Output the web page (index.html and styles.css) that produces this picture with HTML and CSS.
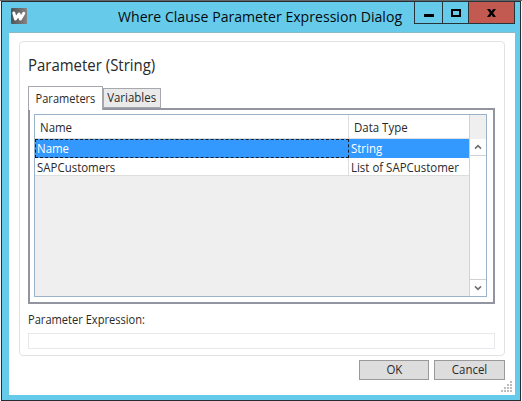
FILE: index.html
```html
<!DOCTYPE html>
<html lang="en">
<head>
<meta charset="utf-8">
<title>Where Clause Parameter Expression Dialog</title>
<link rel="stylesheet" href="styles.css">
</head>
<body>
<div class="window">
  <header class="titlebar">
    <svg class="logo" width="16" height="16" viewBox="0 0 16 16">
      <defs><linearGradient id="g" x1="0" y1="0" x2="1" y2="0"><stop offset="0" stop-color="#505457"/><stop offset="1" stop-color="#85817f"/></linearGradient></defs>
      <rect width="16" height="16" rx="1" fill="url(#g)"/>
      <path d="M2.8 5 L4.5 11 L8 6 L9.4 11 L12.8 5.2" fill="none" stroke="#fff" stroke-width="3" stroke-linejoin="round" stroke-linecap="round"/>
    </svg>
    <h1 class="caption"><span>Where Clause Parameter Expression Dialog</span></h1>
    <div class="controls">
      <button class="control minimize" aria-label="Minimize"><svg width="10" height="10" viewBox="0 0 10 10"><path d="M0 7.5H10" stroke="#000" stroke-width="3"/></svg></button>
      <button class="control maximize" aria-label="Maximize"><svg width="10" height="8" viewBox="0 0 10 8"><path d="M1 1H9V7H1Z" fill="none" stroke="#000" stroke-width="2"/></svg></button>
      <button class="control close" aria-label="Close"><svg width="9" height="8" viewBox="0 0 9 8"><path d="M0 0H3L4.5 2.2L6 0H9L6.1 4L9 8H6L4.5 5.8L3 8H0L2.9 4Z"/></svg></button>
    </div>
  </header>
  <main class="client">
    <section class="group">
      <h2 class="heading"><span>Parameter (String)</span></h2>
      <div class="tabs">
        <div class="tab active"><span>Parameters</span></div>
        <div class="tab"><span>Variables</span></div>
      </div>
      <div class="panel">
        <div class="grid">
          <div class="table">
            <div class="row head"><div class="cell"><span>Name</span></div><div class="cell"><span>Data Type</span></div></div>
            <div class="row selected"><div class="cell focused"><span>Name</span></div><div class="cell"><span>String</span></div></div>
            <div class="row"><div class="cell"><span>SAPCustomers</span></div><div class="cell"><span>List of SAPCustomer</span></div></div>
          </div>
          <div class="scroll">
            <div class="corner"></div>
            <div class="arrow up"><svg width="8" height="6" viewBox="0 0 8 6"><path d="M1 4.6L4 1.6L7 4.6" fill="none" stroke="#707070" stroke-width="1.6"/></svg></div>
            <div class="track"></div>
            <div class="arrow down"><svg width="8" height="6" viewBox="0 0 8 6"><path d="M1 1.4L4 4.4L7 1.4" fill="none" stroke="#707070" stroke-width="1.6"/></svg></div>
          </div>
        </div>
      </div>
      <div class="label"><span>Parameter Expression:</span></div>
      <div class="input"></div>
    </section>
    <footer class="actions">
      <button class="button ok"><span>OK</span></button>
      <button class="button"><span>Cancel</span></button>
    </footer>
    <svg class="grip" width="12" height="12" viewBox="0 0 12 12" fill="#bdbdbd"><path d="M9 0h2v2h-2zM9 3h2v2h-2zM6 3h2v2h-2zM9 6h2v2h-2zM6 6h2v2h-2zM3 6h2v2h-2zM9 9h2v2h-2zM6 9h2v2h-2zM3 9h2v2h-2zM0 9h2v2h-2z"/></svg>
  </main>
</div>
</body>
</html>
```
FILE: styles.css
```css
* { box-sizing: border-box; }
body {
  margin: 0;
  width: 522px;
  height: 401px;
  padding: 1px 1px 0;
  overflow: hidden;
  background: linear-gradient(#62666a 1px, #f7f7f8 1px);
  font: 12px "Open Sans", "Noto Sans", sans-serif;
  color: #292929;
}
h1, h2 { margin: 0; font-weight: 400; }
button { padding: 0; margin: 0; font: inherit; color: inherit; border-radius: 0; }
span { display: inline-block; white-space: nowrap; transform: scaleX(0.955); transform-origin: left; }
.window {
  width: 520px;
  height: 400px;
  border: 1px solid #292c31;
  background: #66caea;
  padding: 0 5px 5px 7px;
}
.titlebar { display: flex; height: 30px; }
.logo { margin: 6px 0 0 2px; flex: none; }
.caption {
  width: 387px;
  padding-left: 91px;
  font-size: 15px;
  line-height: 28px;
  color: #050b0d;
}
.caption span { transform: scaleX(0.94); }
.controls { display: flex; margin-top: -1px; height: 23px; flex: none; }
.control {
  display: flex;
  align-items: center;
  justify-content: center;
  border: 1px solid #27343a;
  background: transparent;
}
.minimize { width: 29px; }
.maximize { width: 27px; margin-left: -1px; }
.close { width: 47px; margin-left: -1px; background: #c35a51; }
.client {
  position: relative;
  height: 363px;
  background: #fff;
  border-top: 1px solid #8bb8cb;
  padding: 8px 10px 0;
}
.group {
  height: 315px;
  border: 1px solid #e2e2e2;
  border-radius: 4px;
  padding: 8px 9px 0 8px;
}
.heading { font-size: 16px; line-height: 30px; height: 36px; }
.heading span { transform: scaleX(0.935); }
.tabs { display: flex; height: 22px; align-items: flex-end; }
.tab {
  width: 58px;
  height: 20px;
  border: 1px solid #a6a8ad;
  background: #eaeaea;
  text-align: center;
  line-height: 18px;
}
.tab span, .button span { transform-origin: center; }
.tab.active {
  position: relative;
  width: 75px;
  height: 24px;
  margin-bottom: -2px;
  border-bottom: 0;
  background: #fff;
  line-height: 24px;
}
.tab.active span { transform: scaleX(0.92); }
.panel { height: 196px; border: 2px solid #9295a0; padding: 4px 6px 5px 4px; }
.grid { display: flex; height: 183px; border: 1px solid #9ab3cb; background: #efefef; }
.table { width: 434px; }
.row { display: flex; height: 18px; background: #fff; border-bottom: 1px solid #dedede; line-height: 19px; }
.cell { width: 120px; padding-left: 2px; }
.cell:first-child { width: 314px; border-right: 1px solid #dedede; }
.head { height: 24px; line-height: 25px; }
.head .cell { padding-left: 5px; }
.selected { height: 19px; background: #3399ff; color: #fff; border-bottom: 0; line-height: 20px; }
.selected .focused { border: 1px dashed #141e2b; padding-left: 1px; line-height: 18px; }
.scroll { display: flex; flex-direction: column; flex: 1; border-left: 1px solid #d2d2d2; background: #fff; }
.corner { height: 24px; background: #efefef; }
.arrow { display: flex; height: 17px; align-items: center; justify-content: center; }
.up { border-bottom: 1px solid #d2d2d2; }
.down { border-top: 1px solid #d2d2d2; }
.track { flex: 1; }
.label { height: 29px; line-height: 31px; }
.label span { transform: scaleX(0.925); }
.input { height: 16px; border: 1px solid #e7e8ec; }
.actions { display: flex; justify-content: flex-end; gap: 5px; padding-top: 4px; }
.button { width: 71px; height: 20px; border: 1px solid #9a9a9a; background: #ddd; line-height: 18px; }
.button.ok { width: 70px; }
.grip { position: absolute; right: 2px; bottom: 2px; }
```
